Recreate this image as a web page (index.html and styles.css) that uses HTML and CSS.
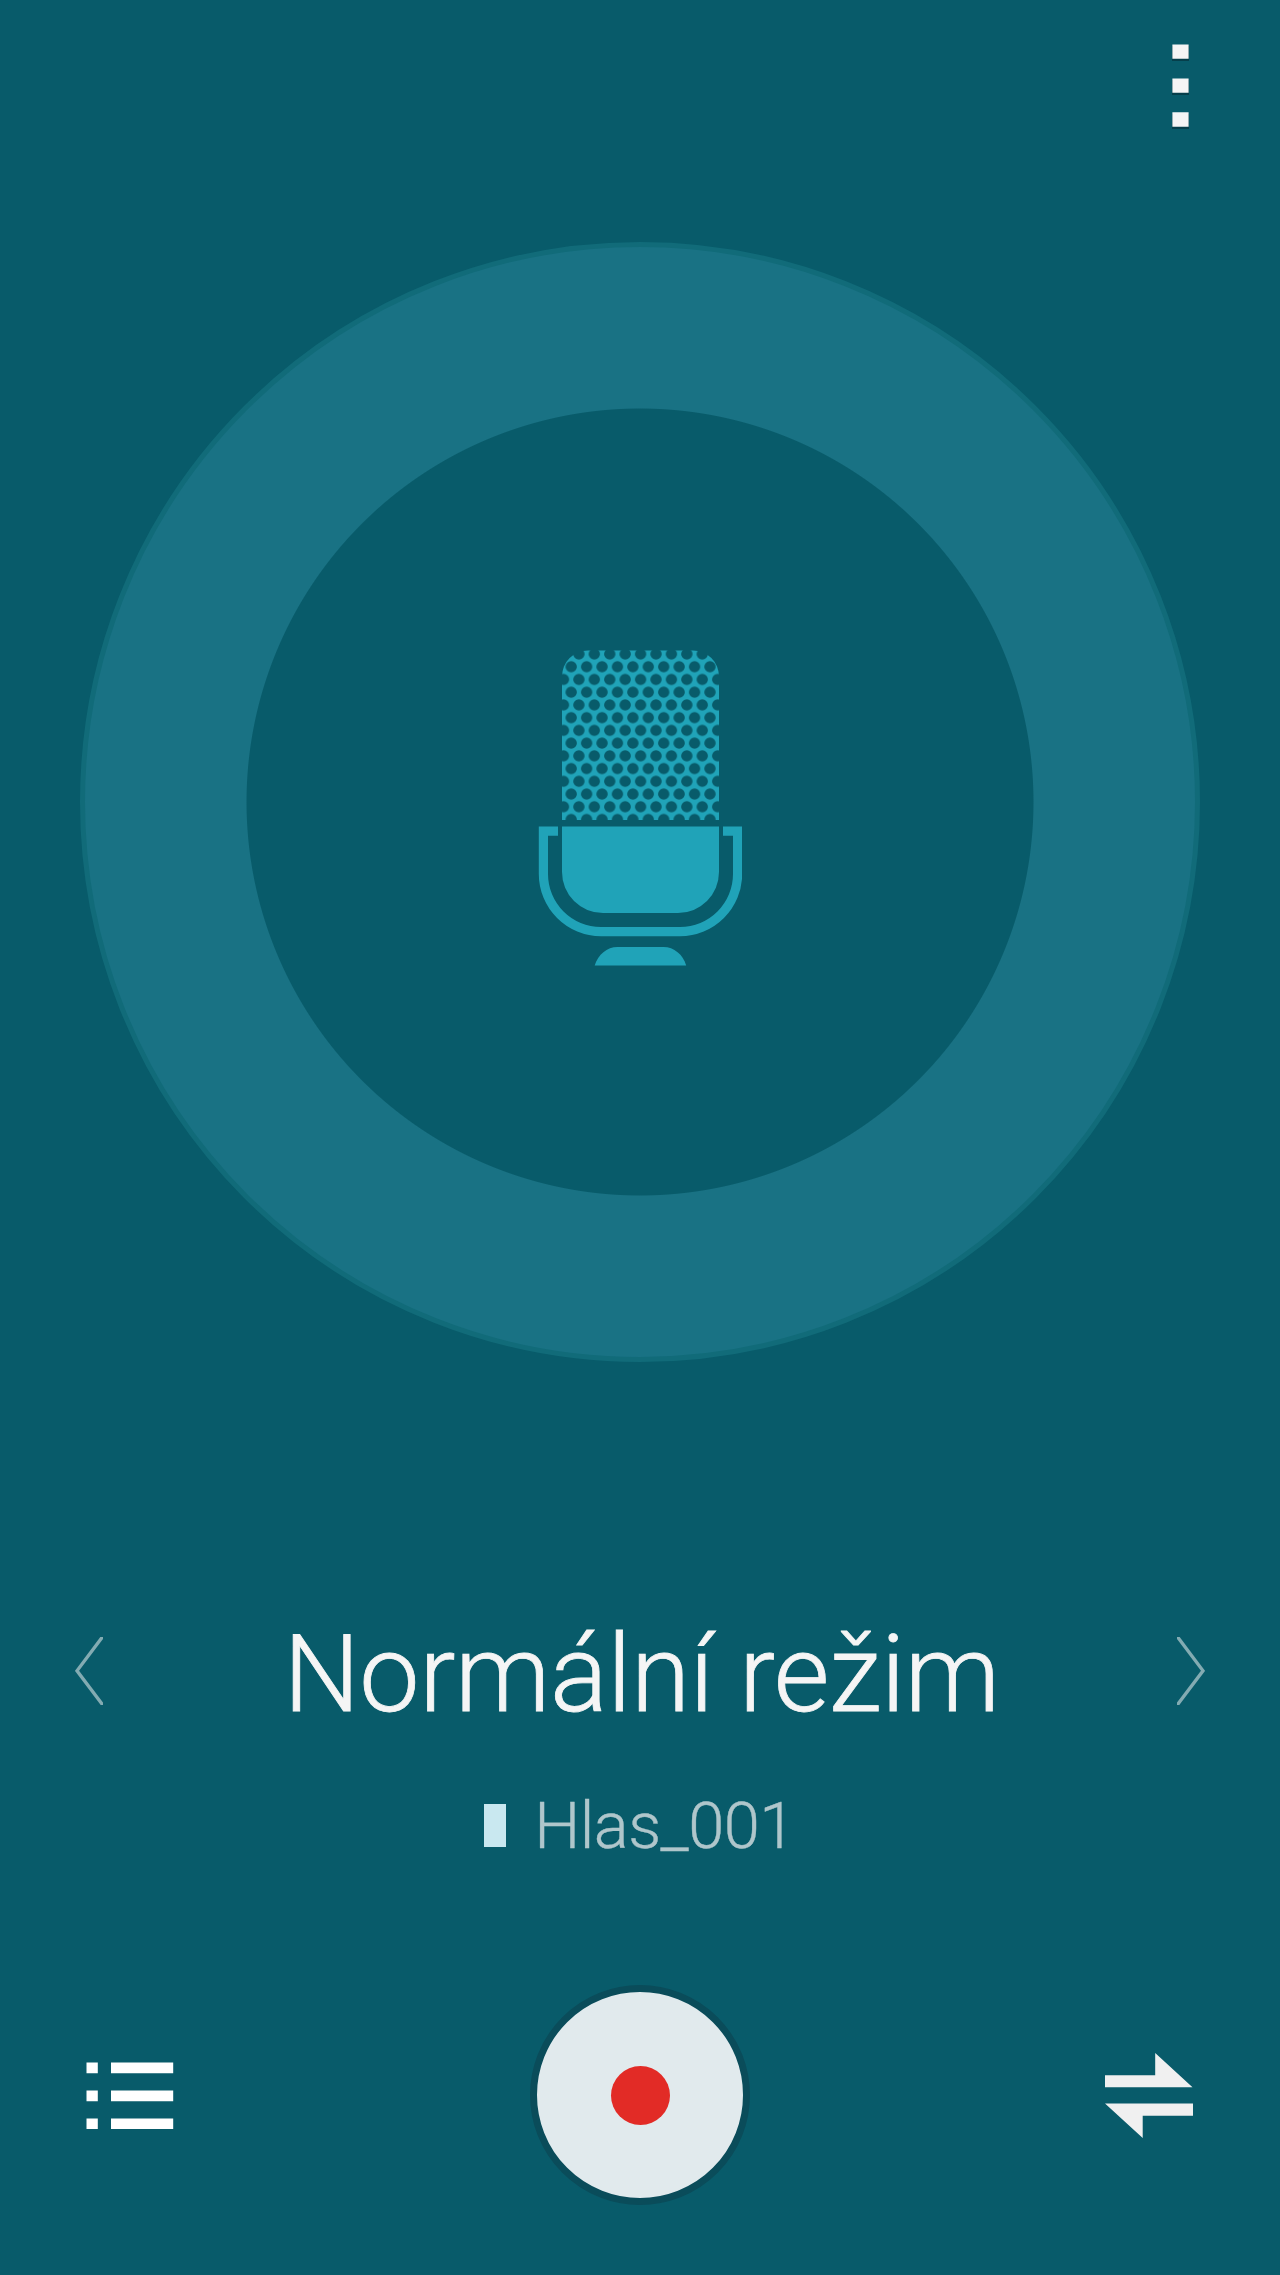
FILE: index.html
```
<!DOCTYPE html>
<html lang="cs">
<head>
<meta charset="utf-8">
<title>Diktafon</title>
<link rel="stylesheet" href="styles.css">
</head>
<body>
<main class="recorder">
  <header class="topbar">
    <button class="icon-button" aria-label="Menu">
      <svg class="icon" width="17" height="86" viewBox="0 0 17 86">
        <g fill="#063f4b"><path d="M0 2h17v15H0zM0 36h17v15H0zM0 70h17v15H0z"/></g>
        <g fill="#f5f5f5"><path d="M.4.4h16.2v14.4H.4zM.4 34.4h16.2v14.4H.4zM.4 68.2h16.2v14.6H.4z"/></g>
      </svg>
    </button>
  </header>

  <section class="dial">
    <svg class="icon mic" width="204" height="316" viewBox="538 650 204 316">
      <defs>
        <pattern id="holes" patternUnits="userSpaceOnUse" x="563.5" y="654" width="15.42" height="25.46">
          <g fill="#085b6a">
            <circle cx="0" cy="0" r="5.7"/><circle cx="15.42" cy="0" r="5.7"/>
            <circle cx="7.71" cy="12.73" r="5.7"/>
            <circle cx="0" cy="25.46" r="5.7"/><circle cx="15.42" cy="25.46" r="5.7"/>
          </g>
        </pattern>
      </defs>
      <path id="grille" fill="#20a3b8" d="M562 820V676.500a26 26 0 0 1 26-26h105a26 26 0 0 1 26 26V820z"/>
      <path fill="url(#holes)" d="M561 821V650H720V821z"/>
      <g fill="#20a3b8">
        <path d="M562 826.600H719V872a41 41 0 0 1-41 41H603a41 41 0 0 1-41-41z"/>
        <path d="M538.800 826.600H558v9.200H548V874a53 53 0 0 0 53 53h79a53 53 0 0 0 53-53v-38.200H723v-9.200h19.200V874a62.300 62.300 0 0 1-62.300 62.300H601.100A62.300 62.300 0 0 1 538.800 874z"/>
        <path d="M594.700 965.500C598 954.500 607 947 617.500 947h46c10.500 0 19.500 7.500 22.700 18.500z"/>
      </g>
    </svg>
  </section>

  <section class="mode">
    <button class="icon-button" aria-label="Předchozí režim">
      <svg class="icon" width="28" height="68" viewBox="0 0 28 68"><path fill="none" stroke="#83abb2" stroke-width="3.3" d="M30-3.500 2 33.800 30 71"/></svg>
    </button>
    <h1 class="mode-name">Normální režim</h1>
    <button class="icon-button" aria-label="Další režim">
      <svg class="icon" width="28" height="68" viewBox="0 0 28 68"><path fill="none" stroke="#83abb2" stroke-width="3.3" d="M-2-3.500 26 33.800-2 71"/></svg>
    </button>
  </section>

  <section class="file">
    <span class="file-mark"></span>
    <span class="file-name">Hlas_001</span>
  </section>

  <footer class="controls">
    <button class="icon-button" aria-label="Seznam">
      <svg class="icon" width="89" height="68" viewBox="0 -1 89 68"><path fill="#fff" d="M.5.400h11.300v10.900H.5zM25 .400h62.200v10.900H25zM.5 28.400h11.300v10.900H.5zM25 28.400h62.200v10.900H25zM.5 56.400h11.300v10.900H.5zM25 56.400h62.200v10.900H25z"/></svg>
    </button>
    <button class="record" aria-label="Nahrávat"><span class="record-dot"></span></button>
    <button class="icon-button" aria-label="Přepnout">
      <svg class="icon" width="89" height="86" viewBox="0 -1 89 86"><path fill="#f0f0f0" d="M0 22.200h50.200V0L87.500 34.300H0zM0 50.400h88v12.400H37.700V85z"/></svg>
    </button>
  </footer>
</main>
</body>
</html>
```
FILE: styles.css
```
* {
  box-sizing: border-box;
}

body {
  margin: 0;
  background: #085b6a;
  font-family: Roboto, "Liberation Sans", sans-serif;
  font-weight: 300;
}

button {
  display: block;
  margin: 0;
  padding: 0;
  border: 0;
  background: none;
}

.icon {
  display: block;
}

.recorder {
  display: flex;
  flex-direction: column;
  align-items: center;
  width: 1280px;
  height: 2275px;
  overflow: hidden;
}

.topbar {
  display: flex;
  align-items: flex-start;
  justify-content: flex-end;
  width: 100%;
  height: 242px;
  padding: 44px 91px 0 0;
}

.dial {
  display: flex;
  justify-content: center;
  width: 1120px;
  height: 1120px;
  padding-top: 403px;
  border: 5px solid #116b79;
  border-radius: 50%;
  background: radial-gradient(circle, #085b6a 393px, #197284 394px);
}

.mode {
  display: flex;
  align-items: center;
  justify-content: space-between;
  width: 1130px;
  height: 130px;
  margin-top: 244px;
}

.mode-name {
  margin: 0;
  padding: 5px 0 0 3px;
  color: #f5f5f5;
  font-size: 107.500px;
  font-weight: 300;
  letter-spacing: -0.4px;
  line-height: 130px;
  white-space: nowrap;
  -webkit-text-stroke: 0.8px #f5f5f5;
}

.file {
  display: flex;
  align-items: center;
  gap: 28px;
  height: 80px;
  margin-top: 49px;
}

.file-mark {
  width: 22px;
  height: 43px;
  background: #c9e8f0;
}

.file-name {
  padding: 1px 1px 0 0;
  color: #afc6cb;
  font-size: 65px;
  letter-spacing: -0.5px;
  line-height: 80px;
  -webkit-text-stroke: 0.4px #afc6cb;
}

.controls {
  display: flex;
  align-items: center;
  justify-content: space-between;
  width: 1108px;
  height: 220px;
  margin-top: 120px;
}

.record {
  display: flex;
  align-items: center;
  justify-content: center;
  width: 220px;
  height: 220px;
  border: 7px solid #0a4c5a;
  border-radius: 50%;
  background: #e1eaed;
}

.record-dot {
  width: 59px;
  height: 59px;
  border-radius: 50%;
  background: #e22b26;
}
```
